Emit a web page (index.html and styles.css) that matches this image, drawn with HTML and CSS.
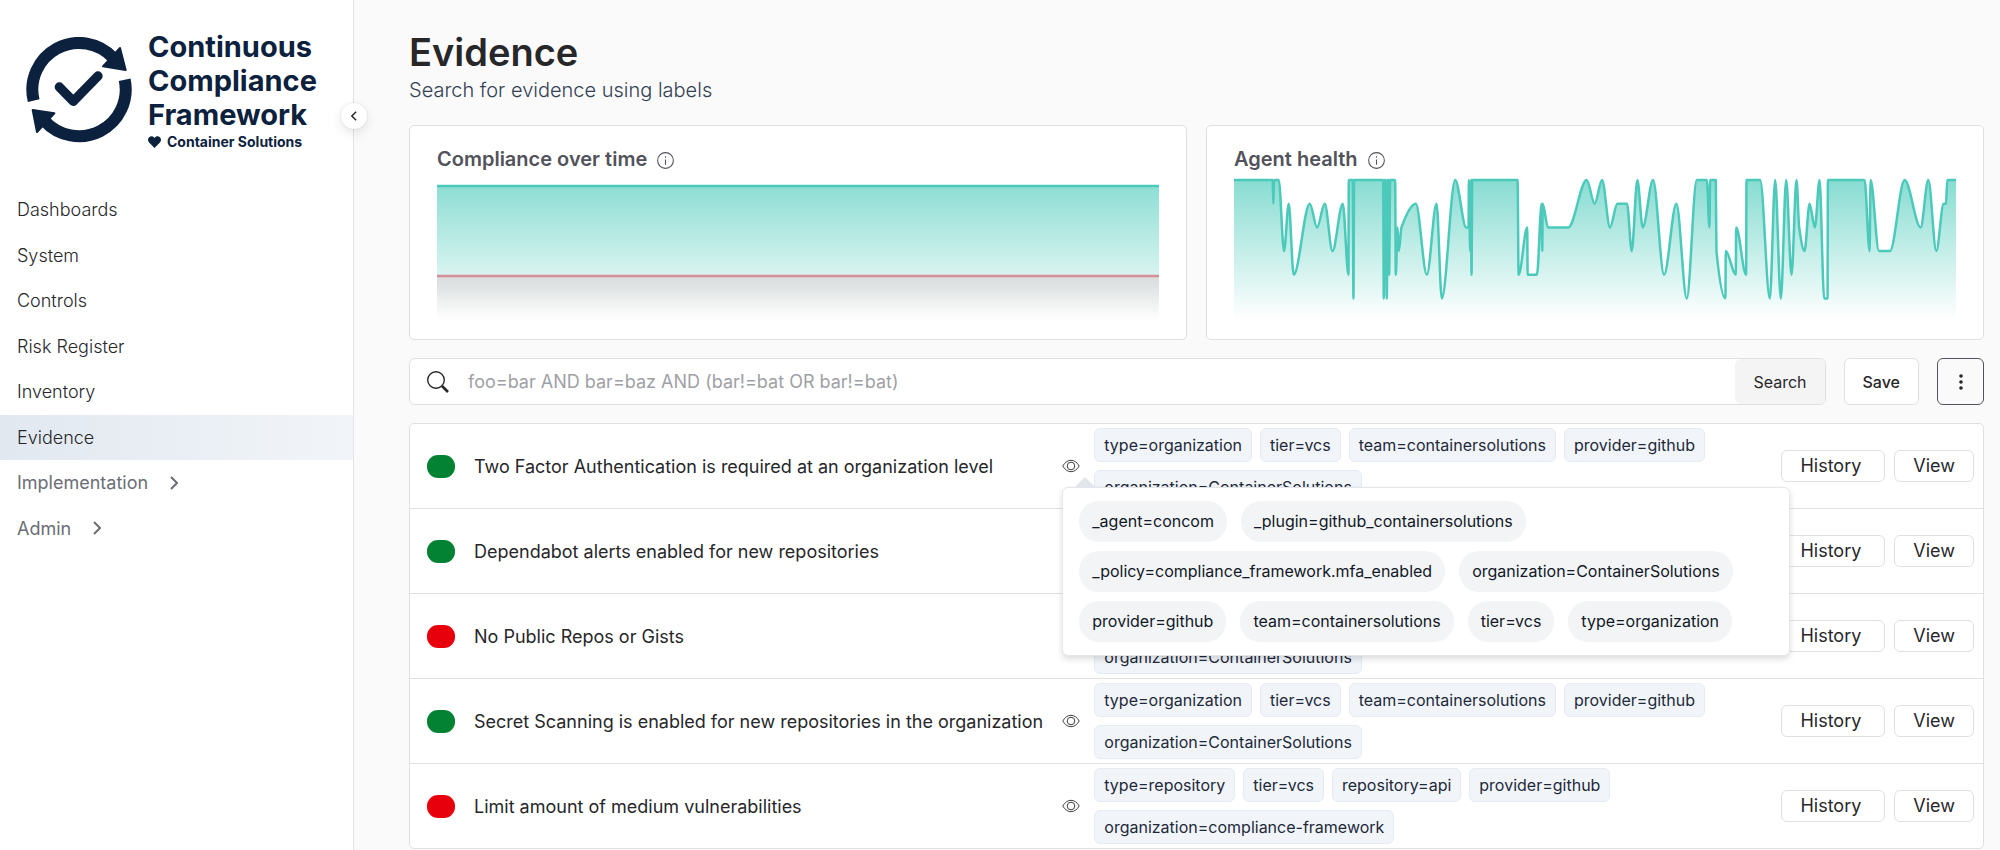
FILE: index.html
```html
<!DOCTYPE html>
<html lang="en">
<head>
    <meta charset="UTF-8">
    <meta name="viewport" content="width=device-width, initial-scale=1.0">
    <title>Evidence - Continuous Compliance Framework</title>
    <link rel="stylesheet" href="styles.css">
</head>
<body>
    <!-- Shared icons -->
    <svg class="sprite" aria-hidden="true">
        <symbol id="eye" viewBox="0 0 18 14">
            <path d="M.8 7C2.8 3.4 5.7 1.3 9 1.3S15.200 3.400 17.200 7C15.200 10.600 12.300 12.700 9 12.700S2.800 10.600.8 7Z"/>
            <circle cx="9" cy="7" r="3.800"/>
        </symbol>
        <symbol id="info" viewBox="0 0 16 16">
            <circle cx="8" cy="8" r="7.400"/>
            <path d="M8 7v5M8 4v1.400"/>
        </symbol>
        <symbol id="chevron" viewBox="0 0 8 14">
            <path d="M1 1l6 6-6 6"/>
        </symbol>
    </svg>

    <!-- Sidebar -->
    <aside class="sidebar">
        <div class="logo">
            <svg class="logo-mark" viewBox="78 110 318 318" aria-hidden="true">
                <path class="ring" d="M101 301A140 140 0 0 1 340 173"/>
                <path class="ring" d="M374 238A140 140 0 0 1 133 361"/>
                <path class="tip" d="M360 143L377 209L309 198Z"/>
                <path class="tip" d="M98 329L163 339L111 395Z"/>
                <path class="tick" d="M178 260L220 303L294 227"/>
            </svg>
            <div class="logo-text">
                <strong>Continuous<br>Compliance<br>Framework</strong>
                <span class="logo-by">
                    <svg class="heart" viewBox="0 0 24 22" aria-hidden="true"><path d="M12 22L2 12C-1 8.500-.5 4 2.500 1.700C5.500-.6 9.500 0 12 3.500C14.500 0 18.500-.6 21.500 1.700C24.500 4 25 8.500 22 12Z"/></svg>
                    Container Solutions
                </span>
            </div>
        </div>
        <button class="collapse" type="button" aria-label="Collapse sidebar">
            <svg viewBox="0 0 8 14" aria-hidden="true"><path d="M7 1L1 7l6 6"/></svg>
        </button>
        <nav>
            <a href="#">Dashboards</a>
            <a href="#">System</a>
            <a href="#">Controls</a>
            <a href="#">Risk Register</a>
            <a href="#">Inventory</a>
            <a href="#" class="active" aria-current="page">Evidence</a>
            <button type="button">Implementation <svg aria-hidden="true"><use href="#chevron"/></svg></button>
            <button type="button">Admin <svg aria-hidden="true"><use href="#chevron"/></svg></button>
        </nav>
    </aside>

    <!-- Evidence page -->
    <main>
        <header>
            <h1>Evidence</h1>
            <p>Search for evidence using labels</p>
        </header>

        <section class="charts">
            <div class="card chart-card">
                <h2>Compliance over time <svg class="info" aria-hidden="true"><use href="#info"/></svg></h2>
                <svg class="chart" viewBox="0 0 100 144" preserveAspectRatio="none" role="img" aria-label="Compliance over time">
                    <defs>
                        <linearGradient id="teal" gradientUnits="userSpaceOnUse" x1="0" y1="2" x2="0" y2="142">
                            <stop offset="0" stop-color="#45c9b9" stop-opacity=".64"/>
                            <stop offset="1" stop-color="#45c9b9" stop-opacity="0"/>
                        </linearGradient>
                        <linearGradient id="grey" x1="0" y1="0" x2="0" y2="1">
                            <stop offset="0" stop-color="#d8dcdc"/>
                            <stop offset="1" stop-color="#ffffff"/>
                        </linearGradient>
                    </defs>
                    <rect x="0" y="8" width="100" height="91" fill="url(#teal)"/>
                    <rect x="0" y="99" width="100" height="43" fill="url(#grey)"/>
                    <path class="line" d="M0 8H100"/>
                    <path class="line line-red" d="M0 98H100"/>
                </svg>
            </div>
            <div class="card chart-card">
                <h2>Agent health <svg class="info" aria-hidden="true"><use href="#info"/></svg></h2>
                <svg class="chart" id="agentChart" viewBox="0 0 2064 144" preserveAspectRatio="none" role="img" aria-label="Agent health">
                    <path id="agentArea" fill="url(#teal)"/>
                    <path id="agentLine" class="line"/>
                </svg>
            </div>
        </section>

        <form class="toolbar">
            <div class="search">
                <svg viewBox="0 0 22 22" aria-hidden="true"><circle cx="9" cy="9" r="8.300"/><path class="handle" d="M15 15l6 6"/></svg>
                <input type="text" aria-label="Search evidence" placeholder="foo=bar AND bar=baz AND (bar!=bat OR bar!=bat)">
                <button type="submit" class="btn-search">Search</button>
            </div>
            <button type="button" class="btn-save">Save</button>
            <button type="button" class="btn-more" aria-label="More options">
                <svg viewBox="0 0 4 16" aria-hidden="true"><circle cx="2" cy="2" r="1.800"/><circle cx="2" cy="8" r="1.800"/><circle cx="2" cy="14" r="1.800"/></svg>
            </button>
        </form>

        <div class="card results">
            <table>
                <colgroup>
                    <col class="col-status">
                    <col class="col-title">
                    <col class="col-eye">
                    <col>
                    <col class="col-actions">
                </colgroup>
                <tbody>
                    <tr>
                        <td><span class="status pass"></span></td>
                        <td class="title">Two Factor Authentication is required at an organization level</td>
                        <td>
                            <div class="labels">
                                <button type="button" class="eye" aria-label="Show all labels"><svg aria-hidden="true"><use href="#eye"/></svg></button>
                                <div class="tooltip" role="tooltip">
                                    <span>_agent=concom</span>
                                    <span>_plugin=github_containersolutions</span>
                                    <span>_policy=compliance_framework.mfa_enabled</span>
                                    <span>organization=ContainerSolutions</span>
                                    <span>provider=github</span>
                                    <span>team=containersolutions</span>
                                    <span>tier=vcs</span>
                                    <span>type=organization</span>
                                </div>
                            </div>
                        </td>
                        <td><div class="tags"><span>type=organization</span><span>tier=vcs</span><span>team=containersolutions</span><span>provider=github</span><span>organization=ContainerSolutions</span></div></td>
                        <td><div class="actions"><button type="button" class="history">History</button><button type="button">View</button></div></td>
                    </tr>
                    <tr>
                        <td><span class="status pass"></span></td>
                        <td class="title">Dependabot alerts enabled for new repositories</td>
                        <td><button type="button" class="eye" aria-label="Show all labels"><svg aria-hidden="true"><use href="#eye"/></svg></button></td>
                        <td><div class="tags"><span>type=organization</span><span>tier=vcs</span><span>team=containersolutions</span><span>provider=github</span><span>organization=ContainerSolutions</span></div></td>
                        <td><div class="actions"><button type="button" class="history">History</button><button type="button">View</button></div></td>
                    </tr>
                    <tr>
                        <td><span class="status fail"></span></td>
                        <td class="title">No Public Repos or Gists</td>
                        <td><button type="button" class="eye" aria-label="Show all labels"><svg aria-hidden="true"><use href="#eye"/></svg></button></td>
                        <td><div class="tags"><span>type=organization</span><span>tier=vcs</span><span>team=containersolutions</span><span>provider=github</span><span>organization=ContainerSolutions</span></div></td>
                        <td><div class="actions"><button type="button" class="history">History</button><button type="button">View</button></div></td>
                    </tr>
                    <tr>
                        <td><span class="status pass"></span></td>
                        <td class="title">Secret Scanning is enabled for new repositories in the organization</td>
                        <td><button type="button" class="eye" aria-label="Show all labels"><svg aria-hidden="true"><use href="#eye"/></svg></button></td>
                        <td><div class="tags"><span>type=organization</span><span>tier=vcs</span><span>team=containersolutions</span><span>provider=github</span><span>organization=ContainerSolutions</span></div></td>
                        <td><div class="actions"><button type="button" class="history">History</button><button type="button">View</button></div></td>
                    </tr>
                    <tr>
                        <td><span class="status fail"></span></td>
                        <td class="title">Limit amount of medium vulnerabilities</td>
                        <td><button type="button" class="eye" aria-label="Show all labels"><svg aria-hidden="true"><use href="#eye"/></svg></button></td>
                        <td><div class="tags"><span>type=repository</span><span>tier=vcs</span><span>repository=api</span><span>provider=github</span><span>organization=compliance-framework</span></div></td>
                        <td><div class="actions"><button type="button" class="history">History</button><button type="button">View</button></div></td>
                    </tr>
                </tbody>
            </table>
        </div>
    </main>

    <script>
        // [time, number of agents down]
        const samples = [
            [0,0],[116,0],[118,1],[120,0],[134,0],[150,3],[164,1],[179,4],[227,1],[249,2],[272,1],[295,3],[326,1],[343,4],
            [344,0],[356,0],[358,5],[360,0],[447,0],[449,5],[451,0],[455,0],[458,5],[460,0],[463,0],[465,4],[468,0],[483,0],
            [485,4],[490,2],[494,3],[502,2],[545,1],[578,4],[607,1],[623,5],[663,0],[696,2],[703,2],[704,0],[708,3],[710,0],
            [712,4],[714,0],[850,0],[853,4],[879,2],[880,4],[908,4],[922,1],[924,3],[925,1],[941,2],[1002,2],[1057,0],
            [1081,1],[1103,0],[1127,2],[1149,1],[1178,1],[1192,3],[1209,0],[1225,2],[1256,0],[1289,4],[1326,1],[1357,5],
            [1387,0],[1417,0],[1425,2],[1427,0],[1444,0],[1446,3],[1473,5],[1474,3],[1504,4],[1505,2],[1535,4],[1536,0],
            [1577,0],[1606,5],[1622,0],[1639,5],[1655,0],[1671,4],[1686,0],[1694,2],[1710,3],[1725,1],[1741,2],[1755,0],
            [1769,5],[1779,5],[1780,0],[1890,0],[1905,3],[1908,0],[1933,3],[1966,3],[2010,0],[2058,2],[2081,0],[2105,3],
            [2127,1],[2134,1],[2138,0],[2164,0]
        ];

        // monotone cubic curve through the samples
        function curve(data) {
            const last = data[data.length - 1][0];
            const pts = data.map(([t, v]) => [t / last * 2064, 2 + v * 23.7]);
            const slope = pts.slice(1).map((p, i) => (p[1] - pts[i][1]) / (p[0] - pts[i][0]));
            const m = pts.map((p, i) => {
                const a = slope[i - 1], b = slope[i];
                if (a === undefined || b === undefined || a * b <= 0) return 0;
                return 2 * a * b / (a + b);
            });
            let d = `M${pts[0]}`;
            for (let i = 1; i < pts.length; i++) {
                const [x0, y0] = pts[i - 1], [x1, y1] = pts[i];
                const h = (x1 - x0) / 3;
                d += `C${x0 + h},${y0 + h * m[i - 1]} ${x1 - h},${y1 - h * m[i]} ${x1},${y1}`;
            }
            return d;
        }

        const d = curve(samples);
        document.getElementById('agentLine').setAttribute('d', d);
        document.getElementById('agentArea').setAttribute('d', d + 'V142H0Z');

        document.querySelector('.toolbar').onsubmit = function(e) {
            e.preventDefault();
        };
    </script>
</body>
</html>
```

FILE: styles.css
```css
* {
    box-sizing: border-box;
}
body {
    font-family: Inter, "Liberation Sans", sans-serif;
    font-size: 18px;
    margin: 0;
    display: flex;
    height: 100vh;
    overflow: hidden;
    background: #fafafa;
    color: #27272a;
}
button {
    font-family: inherit;
    color: inherit;
    cursor: pointer;
}
svg {
    fill: none;
    stroke: currentColor;
    flex: none;
}
.sprite {
    position: absolute;
    width: 0;
    height: 0;
}

/* Sidebar */
.sidebar {
    position: relative;
    flex: none;
    width: 354px;
    background: #fff;
    border-right: 1px solid #e4e4e7;
}
.logo {
    display: flex;
    gap: 16px;
    padding: 30px 26px 0;
    height: 187px;
    color: #0b213d;
}
.logo-mark {
    width: 106px;
    height: 106px;
    margin-top: 7px;
}
.ring {
    stroke-width: 36;
}
.tip {
    fill: currentColor;
    stroke-width: 6;
    stroke-linejoin: round;
}
.tick {
    stroke-width: 28;
    stroke-linecap: round;
    stroke-linejoin: round;
}
.logo-text strong {
    display: block;
    font-size: 29px;
    line-height: 34px;
    font-weight: 700;
}
.logo-by {
    display: flex;
    align-items: center;
    gap: 6px;
    font-size: 14px;
    line-height: 20px;
    font-weight: 700;
}
.heart {
    width: 13px;
    height: 12px;
    fill: currentColor;
    stroke: none;
}
.collapse {
    position: absolute;
    top: 103px;
    right: -14px;
    width: 26px;
    height: 26px;
    padding: 0;
    display: flex;
    align-items: center;
    justify-content: center;
    border: 0;
    border-radius: 50%;
    background: #fff;
    box-shadow: 0 4px 12px rgba(0, 0, 0, 0.1), 0 0 2px rgba(0, 0, 0, 0.12);
}
.collapse svg {
    width: 6px;
    height: 10px;
    stroke-width: 2;
}
nav {
    display: grid;
    grid-auto-rows: 1fr;
    height: 364px;
}
nav a, nav button {
    display: flex;
    align-items: center;
    gap: 22px;
    padding: 0 17px;
    border: 0;
    background: none;
    font-size: 18px;
    font-weight: 300;
    color: #27272a;
    text-decoration: none;
}
nav button {
    font-weight: 400;
    color: #6b6e76;
}
nav svg {
    width: 8px;
    height: 14px;
    stroke-width: 2;
}
nav .active {
    background: linear-gradient(to right, #e2e8f0, #f1f5f9);
}

/* Page */
main {
    flex: 1;
    min-width: 0;
    padding: 30px 16px 0 55px;
}
h1 {
    margin: 0;
    font-size: 38px;
    line-height: 45px;
    font-weight: 600;
}
header p {
    margin: 0;
    font-size: 20px;
    line-height: 30px;
    font-weight: 300;
    color: #334155;
}
.card {
    background: #fff;
    border: 1px solid #e0e0e3;
    border-radius: 5px;
}
.charts {
    display: grid;
    grid-template-columns: 1fr 1fr;
    gap: 19px;
    margin-top: 20px;
}
.chart-card {
    padding: 17px 27px;
}
h2 {
    display: flex;
    align-items: center;
    gap: 10px;
    margin: 0 0 3px;
    font-size: 20px;
    line-height: 32px;
    font-weight: 600;
    color: #52525b;
}
.info {
    width: 17px;
    height: 17px;
    margin-top: 2px;
}
.chart {
    display: block;
    width: 100%;
    height: 144px;
    stroke: none;
}
.line {
    fill: none;
    stroke: #4bc9ba;
    stroke-width: 2.5;
    stroke-linejoin: round;
    vector-effect: non-scaling-stroke;
}
.line-red {
    stroke: #d68f98;
}

/* Search */
.toolbar {
    display: flex;
    gap: 18px;
    margin: 18px 0;
}
.search {
    display: flex;
    align-items: center;
    flex: 1;
    height: 47px;
    padding-left: 17px;
    background: #fff;
    border: 1px solid #e0e0e3;
    border-radius: 6px;
}
.search svg {
    width: 22px;
    height: 22px;
    overflow: visible;
    stroke-width: 1.4;
}
.search .handle {
    stroke-width: 2.6;
}
.search input {
    flex: 1;
    align-self: stretch;
    margin-left: 17px;
    border: 0;
    padding: 0 2px;
    background: none;
    outline: 0;
    font-family: inherit;
    font-size: 18px;
}
.search input::placeholder {
    color: #9f9fa6;
}
.toolbar button {
    font-size: 16px;
    border: 1px solid #e0e0e3;
    border-radius: 6px;
    background: #fff;
}
.toolbar .btn-search {
    align-self: stretch;
    padding: 0 18px;
    border: 0;
    background: #f4f4f5;
}
.toolbar .btn-save {
    padding: 0 18px;
    font-weight: 500;
}
.toolbar .btn-more {
    display: flex;
    align-items: center;
    justify-content: center;
    width: 47px;
    padding: 0;
    border-color: #52525b;
    background: #fafafa;
}
.btn-more svg {
    width: 4px;
    height: 16px;
    fill: currentColor;
    stroke: none;
}

/* Results */
table {
    width: 100%;
    table-layout: fixed;
    border-collapse: collapse;
}
.col-status {
    width: 64px;
}
.col-title {
    width: 37.4%;
}
.col-eye {
    width: 32px;
}
.col-actions {
    width: 204px;
}
tr + tr {
    border-top: 1px solid #e0e0e3;
}
td {
    padding: 4px 0;
}
.status {
    display: block;
    width: 28px;
    height: 23px;
    margin-left: 17px;
    border-radius: 11px;
}
.pass {
    background: #048234;
}
.fail {
    background: #e7000b;
}
.title {
    font-size: 18px;
    white-space: nowrap;
}
.labels {
    position: relative;
}
.eye {
    display: flex;
    padding: 0;
    border: 0;
    background: none;
    color: #3f3f46;
}
.eye svg {
    width: 18px;
    height: 14px;
}
.tags {
    display: flex;
    flex-wrap: wrap;
    gap: 8px;
}
.tags span {
    padding: 0 9px;
    border: 1px solid #e6ebf3;
    border-radius: 6px;
    background: #f1f5f9;
    color: #1e293b;
    font-size: 16px;
    line-height: 32px;
}
.actions {
    display: flex;
    justify-content: flex-end;
    gap: 9px;
    padding-right: 9px;
}
.actions button {
    padding: 0 18px;
    border: 1px solid #e0e0e3;
    border-radius: 6px;
    background: #fff;
    font-size: 18px;
    line-height: 30px;
}
.actions .history {
    padding-right: 23px;
}

/* Label tooltip */
.tooltip {
    position: absolute;
    z-index: 1;
    top: 28px;
    left: 0;
    width: 728px;
    display: flex;
    flex-wrap: wrap;
    gap: 9px 14px;
    padding: 13px 16px;
    border: 1px solid #e4e6ea;
    border-radius: 6px;
    background: #fff;
    box-shadow: 0 3px 6px rgba(0, 0, 0, 0.14);
}
.tooltip::before {
    content: "";
    position: absolute;
    left: 11px;
    bottom: 100%;
    border: 11px solid transparent;
    border-top: 0;
    border-bottom-color: #e2e5e9;
}
.tooltip span {
    padding: 0 13px;
    border-radius: 20px;
    background: #f3f4f6;
    color: #111827;
    font-size: 16px;
    line-height: 41px;
}
```
